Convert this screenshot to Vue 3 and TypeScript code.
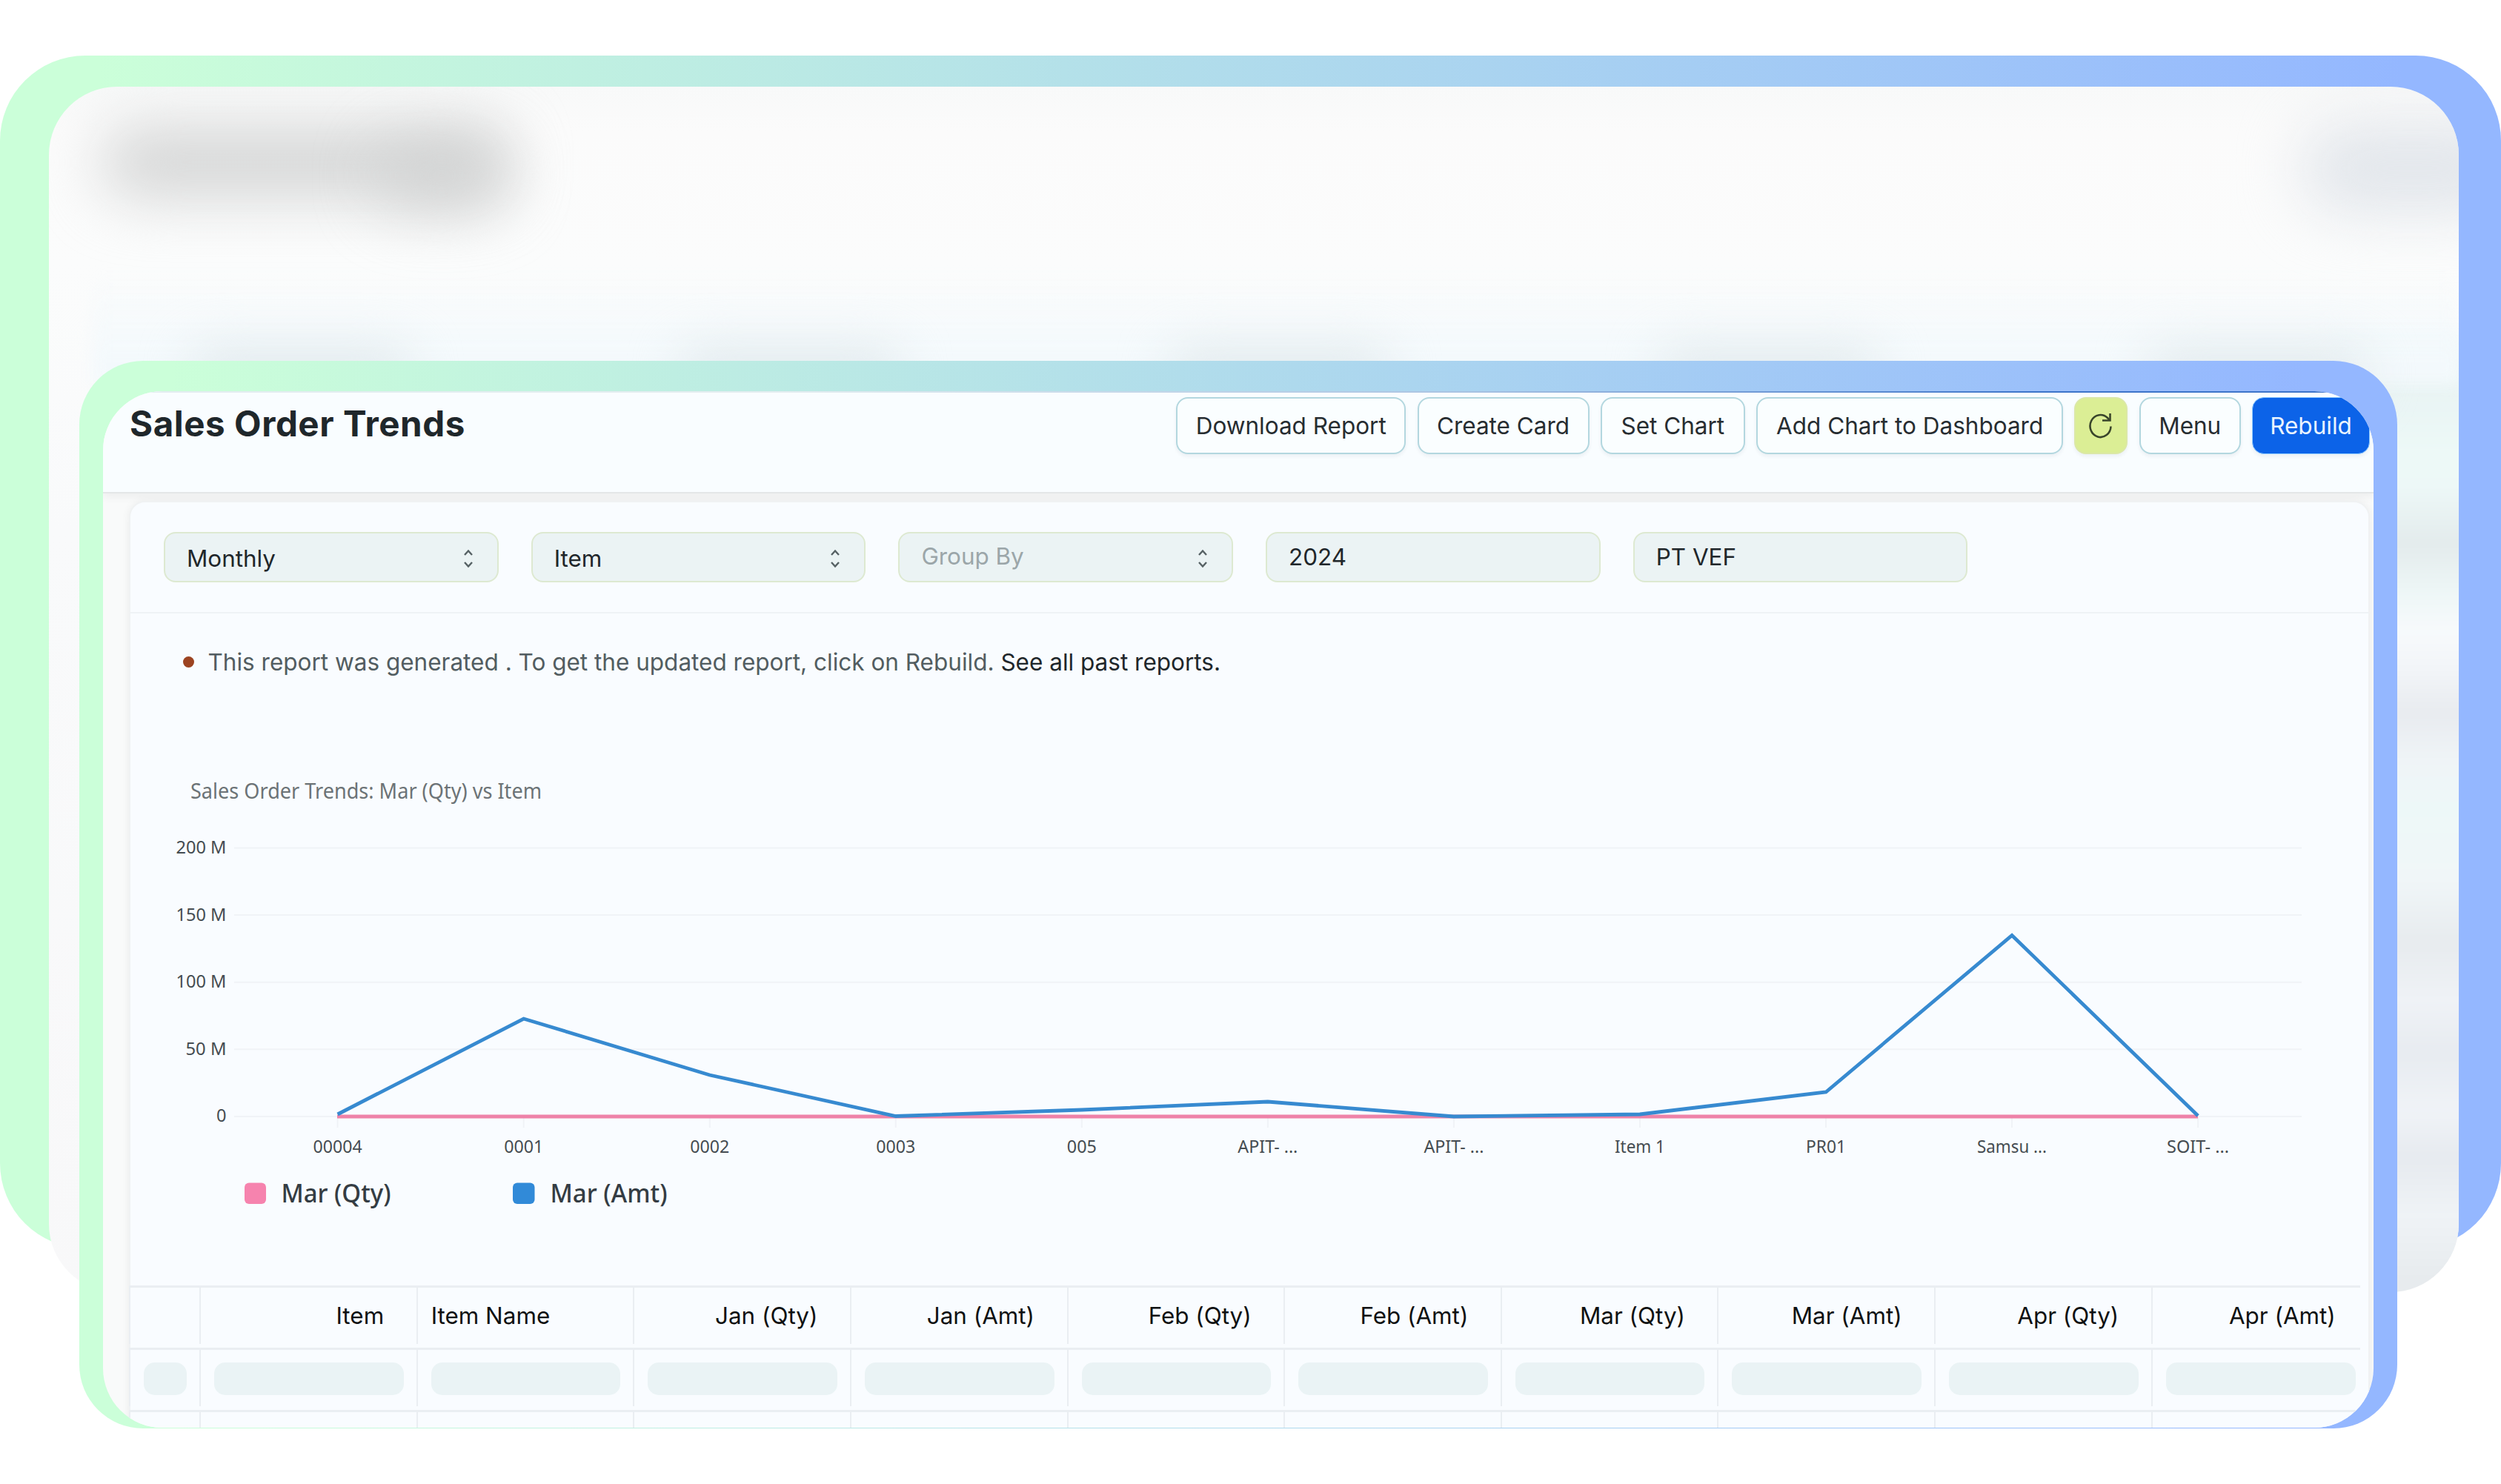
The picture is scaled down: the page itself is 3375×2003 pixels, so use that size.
<script setup lang="ts">
interface Button { label: string; width: number; kind?: string }
interface Filter { value: string; select?: boolean; muted?: boolean }

const buttons: Button[] = [
  { label: 'Download Report', width: 310 },
  { label: 'Create Card', width: 232 },
  { label: 'Set Chart', width: 195 },
  { label: 'Add Chart to Dashboard', width: 414 },
  { label: '', width: 72, kind: 'refresh' },
  { label: 'Menu', width: 137 },
  { label: 'Rebuild', width: 159, kind: 'primary' },
]

const filters: Filter[] = [
  { value: 'Monthly', select: true },
  { value: 'Item', select: true },
  { value: 'Group By', select: true, muted: true },
  { value: '2024' },
  { value: 'PT VEF' },
]

const yTicks = [
  { label: '200 M', length: 68 },
  { label: '150 M', length: 68 },
  { label: '100 M', length: 68 },
  { label: '50 M', length: 55 },
  { label: '0', length: 13.5 },
].map((t, i) => ({ ...t, y: 1144.5 + i * 90.6 }))

const points = [
  { label: '00004', length: 66, y: 1504 },
  { label: '0001', length: 53, y: 1375 },
  { label: '0002', length: 53, y: 1451 },
  { label: '0003', length: 53, y: 1506.5 },
  { label: '005', length: 40, y: 1498 },
  { label: 'APIT- ...', length: 81, y: 1487 },
  { label: 'APIT- ...', length: 81, y: 1507 },
  { label: 'Item 1', length: 68, y: 1504 },
  { label: 'PR01', length: 54, y: 1474 },
  { label: 'Samsu ...', length: 94, y: 1262.5 },
  { label: 'SOIT- ...', length: 84, y: 1506 },
].map((p, i) => ({ ...p, x: 455.6 + i * 251.05 }))
const amountLine = points.map((p) => `${p.x},${p.y}`).join(' ')

const columns = ['', 'Item', 'Item Name', 'Jan (Qty)', 'Jan (Amt)', 'Feb (Qty)', 'Feb (Amt)', 'Mar (Qty)', 'Mar (Amt)', 'Apr (Qty)', 'Apr (Amt)']
</script>

<template>
  <main class="stage">
    <section class="back-frame"></section>
    <section class="back-panel">
      <div class="haze title-a"></div>
      <div class="haze title-b"></div>
      <div class="haze corner"></div>
      <div class="side"></div>
      <div class="table-haze"></div>
      <div v-for="n in 5" :key="n" class="haze col" :style="{ left: `${190 + (n - 1) * 660}px` }"></div>
    </section>

    <section class="front-frame">
      <div class="window">
        <header class="page-head">
          <h1>Sales Order Trends</h1>
          <div class="actions">
            <button v-for="b in buttons" :key="b.label" :class="['btn', b.kind]" :style="{ width: `${b.width}px` }">
              <svg v-if="b.kind === 'refresh'" width="34" height="36" viewBox="0 0 34 36" fill="none" stroke="#39452b" stroke-width="2.6">
                <path d="M30.5 18.500 A14 15 0 1 1 26 7 L29 10.500" />
                <path d="M29.500 1 V10.500 H19" />
              </svg>
              <template v-else>{{ b.label }}</template>
            </button>
          </div>
        </header>

        <div class="card">
          <div class="filters">
            <div v-for="f in filters" :key="f.value" :class="['field', { muted: f.muted, select: f.select }]">
              <span>{{ f.value }}</span>
              <svg v-if="f.select" width="14" height="26" viewBox="0 0 14 26" fill="none" stroke="#566164" stroke-width="2.400">
                <path d="M2 8 L7 2.500 L12 8" />
                <path d="M2 18 L7 23.500 L12 18" />
              </svg>
            </div>
          </div>

          <div class="notice">
            <i class="dot"></i>
            <span class="msg">This report was generated . To get the updated report, click on Rebuild. <b>See all past reports.</b></span>
          </div>

          <svg class="chart" width="3022" height="720" viewBox="176 1015 3022 720">
            <text class="chart-title" x="257" y="1077.500" textLength="474" lengthAdjust="spacingAndGlyphs">Sales Order Trends: Mar (Qty) vs Item</text>
            <g v-for="t in yTicks" :key="t.label">
              <line class="grid" x1="316" x2="3106" :y1="t.y" :y2="t.y" />
              <text class="axis" x="305.500" :y="t.y + 7.500" text-anchor="end" :textLength="t.length" lengthAdjust="spacingAndGlyphs">{{ t.label }}</text>
            </g>
            <g v-for="(p, i) in points" :key="i">
              <line class="grid" :x1="p.x" :x2="p.x" y1="1507" y2="1522" />
              <text class="axis" :x="p.x" y="1555.500" text-anchor="middle" :textLength="p.length" lengthAdjust="spacingAndGlyphs">{{ p.label }}</text>
            </g>
            <line x1="455" x2="2966" y1="1507" y2="1507" stroke="#ee82a8" stroke-width="5" />
            <polyline :points="amountLine" fill="none" stroke="#378ad0" stroke-width="4.800" />
            <rect x="330" y="1596.500" width="29" height="28.500" rx="6" fill="#f683ae" />
            <text class="legend" x="379.500" y="1623" textLength="148" lengthAdjust="spacingAndGlyphs">Mar (Qty)</text>
            <rect x="692" y="1596.500" width="29.500" height="28.500" rx="6" fill="#318ad8" />
            <text class="legend" x="742.500" y="1623" textLength="158" lengthAdjust="spacingAndGlyphs">Mar (Amt)</text>
          </svg>

          <div class="table">
            <div class="row head">
              <div v-for="(c, i) in columns" :key="i" :class="['cell', { start: c === 'Item Name' }]">{{ c }}</div>
            </div>
            <div v-for="r in 2" :key="r" class="row">
              <div v-for="(c, i) in columns" :key="i" class="cell"><i v-if="r === 1" class="bone"></i></div>
            </div>
          </div>
        </div>
      </div>
    </section>
  </main>
</template>

<style>
body { margin: 0; background: #fff; }
</style>

<style scoped>
* { box-sizing: border-box; }
.stage {
  position: relative;
  width: 3375px;
  height: 2003px;
  overflow: hidden;
  background: #fff;
  font-family: Inter, "Liberation Sans", sans-serif;
  color: #1f272b;
}
.back-frame,
.front-frame {
  background: linear-gradient(90deg, #cbffd9 4%, #94b7ff 96%);
}
.back-frame {
  position: absolute;
  left: 0;
  top: 75px;
  width: 3375px;
  height: 1610px;
  border-radius: 115px;
}
.back-panel {
  position: absolute;
  left: 66px;
  top: 117px;
  width: 3252px;
  height: 1627px;
  border-radius: 92px;
  overflow: hidden;
  background: linear-gradient(180deg, #f8f9f9 0, #fbfbfb 60px, #fbfcfc 240px, #f9fafb 600px, #f8f8f9 100%);
}
.haze { position: absolute; border-radius: 60px; filter: blur(40px); }
.title-a { left: 70px; top: 54px; width: 550px; height: 96px; background: #d5d6d6; }
.title-b { left: 440px; top: 72px; width: 180px; height: 96px; background: rgba(206, 208, 208, 0.700); }
.corner { left: 3040px; top: 50px; width: 300px; height: 120px; background: #e2e6eb; }
.side {
  position: absolute;
  left: 3080px;
  top: 330px;
  width: 220px;
  height: 1340px;
  background: linear-gradient(180deg, #f4fafa 0, #e9f4f4 88px, #edf9f7 170px, #edf8f7 210px, #e3ebec 286px, #edf6f6 350px, #f7fafc 406px, #f2f5f8 455px, #e8ebef 514px, #eff4f7 580px, #edf8f8 646px, #f0f6f8 740px, #e7ebee 825px, #eff2f6 903px, #e7ebf0 974px, #f0f3f7 1053px, #e6eaef 1115px, #eff3f6 1193px, #e7ebee 1276px);
  filter: blur(8px);
}
.table-haze {
  position: absolute;
  left: 60px;
  top: 250px;
  width: 3192px;
  height: 150px;
  background: linear-gradient(180deg, rgba(243, 249, 253, 0), #f3f9fc 80%);
  filter: blur(10px);
}
.col { top: 354px; width: 300px; height: 60px; background: #e1e9ec; filter: blur(32px); }

.front-frame {
  position: absolute;
  left: 107px;
  top: 487px;
  width: 3127.500px;
  height: 1441px;
  padding: 41px 31.500px 1px 32px;
  border-radius: 86px;
}
.window {
  position: relative;
  width: 3064px;
  height: 1399px;
  overflow: hidden;
  border-radius: 80px;
  background: #f9fafa;
}
.page-head {
  display: flex;
  justify-content: space-between;
  align-items: flex-start;
  height: 138px;
  padding: 8px 5px 0 36px;
  background:
    linear-gradient(90deg, #e3edf0 30%, #a9c3e2 60%, #3d74c9 85%) 0 0 / 100% 2px no-repeat,
    #f9fdff;
  border-bottom: 2px solid #e4e7e8;
  box-shadow: 0 4px 12px rgba(0, 0, 0, 0.060);
}
h1 {
  margin: 6px 0 0;
  font-size: 47.500px;
  line-height: 60px;
  font-weight: 700;
  letter-spacing: 0.550px;
  white-space: nowrap;
}
.actions { display: flex; gap: 15.300px; }
.btn {
  display: flex;
  align-items: center;
  justify-content: center;
  height: 77px;
  padding: 0;
  border: 2.500px solid #b3d7df;
  border-radius: 16px;
  background: #fafeff;
  box-shadow: 0 3px 5px rgba(0, 40, 60, 0.060);
  font: 400 31.500px Inter, sans-serif;
  color: #272d31;
  white-space: nowrap;
}
.refresh { background: #dbee95; border-color: #dbe8a6; }
.primary { background: #0c63e8; border-color: #8cc9ff; color: #e9f4ff; border-width: 1.500px; }

.card {
  display: flex;
  flex-direction: column;
  width: 3024px;
  margin: 10px 0 0 35px;
  border: 2px solid #f0f2f3;
  border-radius: 22px 22px 0 0;
  background: #f9fcff;
  box-shadow: 0 0 12px rgba(0, 0, 0, 0.060);
}
.filters {
  display: flex;
  gap: 44px;
  height: 150px;
  padding: 40px 0 0 45px;
  border-bottom: 2px solid #eff3f6;
}
.field {
  display: flex;
  align-items: center;
  justify-content: space-between;
  width: 451.700px;
  height: 68px;
  padding: 0 32px 0 29px;
  border: 2px solid #dde9d1;
  border-radius: 16px;
  background: #ebf3f4;
  font-size: 31.400px;
  color: #1f272b;
}
.select { padding-top: 3px; }
.muted { color: #9ba6a9; }
.muted span { margin-top: -5px; }
.notice {
  display: flex;
  align-items: center;
  gap: 18.500px;
  height: 187px;
  padding: 0 0 56px 71px;
  font-size: 31.500px;
  color: #525d61;
  white-space: nowrap;
}
.notice b { font-weight: 400; color: #1f272b; }
.dot { width: 15px; height: 15px; border-radius: 50%; background: #9c4321; }
.chart { display: block; font-family: "Noto Sans", "Open Sans", sans-serif; }
.chart-title { font-size: 29px; fill: #6c7376; }
.axis { font-size: 24px; fill: #454c51; }
.legend { font-size: 33.500px; font-weight: 500; fill: #343c43; }
.grid { stroke: #f0f3f7; stroke-width: 2; }

.table { width: 3011px; margin-left: -2px; }
.row {
  display: flex;
  height: 84px;
  padding-bottom: 5px;
  border-top: 3px solid #eaeef2;
}
.cell {
  display: flex;
  flex: none;
  align-items: center;
  justify-content: flex-end;
  width: 292.650px;
  padding: 0 17px 0 18px;
  border-left: 2px solid #eaeef2;
}
.cell:first-child { width: 95px; }
.cell:last-child { width: 282px; padding-right: 6px; }
.head .cell { padding-right: 43.500px; font-size: 31.400px; color: #0f1112; white-space: nowrap; }
.head .cell:last-child { padding-right: 33px; }
.head .start { justify-content: flex-start; }
.bone { width: 100%; height: 44px; margin-top: 1px; border-radius: 15px; background: #eaf3f5; }
</style>
